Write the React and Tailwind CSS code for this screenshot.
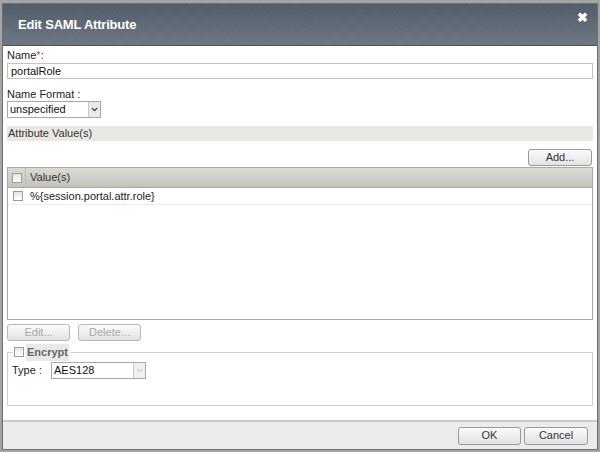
import { ChevronDown } from "lucide-react";

const font = "font-['Liberation_Sans',Arial,sans-serif]";

const Btn = ({ children, disabled, className = "" }) => (
  <button
    className={`h-[17px] rounded-[3px] border border-[#9a9a9a] bg-[linear-gradient(#fbfbfb,#e2e2e2)] text-[11px] leading-none ${
      disabled ? "text-[#a8a8a8] border-[#b8b8b8]" : "text-[#333]"
    } ${className}`}
  >
    {children}
  </button>
);

const Check = ({ className = "" }) => (
  <span
    className={`inline-block w-[10px] h-[10px] border border-[#9c9c9c] bg-[linear-gradient(#e6e6e6,#ffffff)] ${className}`}
  />
);

const Select = ({ value, className = "", disabled }) => (
  <div
    className={`flex h-[17px] border border-[#a9a9a9] bg-white ${className}`}
  >
    <div className="flex-1 pl-[2px] text-[11px] leading-[15px] text-[#111]">
      {value}
    </div>
    <div
      className={`w-[12px] flex items-center justify-center border-l border-[#c8c8c8] ${
        disabled ? "bg-[#f0f0f0]" : "bg-[#e9e9e9]"
      }`}
    >
      <ChevronDown
        size={9}
        strokeWidth={disabled ? 2 : 3.5}
        className={disabled ? "text-[#a0a0a0]" : "text-[#333]"}
      />
    </div>
  </div>
);

export default function App() {
  return (
    <div className={`w-[600px] h-[452px] bg-[#a4a4a4] pt-[3px] px-[2px] ${font}`}>
      <div className="h-[447px] flex flex-col border border-[#6f6f6f] bg-white">
        {/* header */}
        <div className="relative h-[42px] flex items-center pl-[15px] bg-[repeating-linear-gradient(135deg,rgba(255,255,255,0.04)_0px,rgba(255,255,255,0.04)_1px,transparent_1px,transparent_3px),linear-gradient(#4f5b67,#6b7682)] border-b border-[#4a525a]">
          <span className="text-white font-bold text-[13px] tracking-[-0.2px]">
            Edit SAML Attribute
          </span>
          <span className="absolute right-[9px] top-[7px] text-white font-bold text-[13px] leading-none">
            ✖
          </span>
        </div>

        {/* body */}
        <div className="flex-1 flex flex-col px-[4px] text-[11px] text-[#222]">
          <div className="mt-[3px] leading-[12px]">
            Name<span className="text-[#e33]">*</span>:
          </div>
          <div className="mt-[2px] h-[16px] border border-[#c3c3c3] pl-[3px] leading-[14px] text-[#111]">
            portalRole
          </div>
          <div className="mt-[9px] leading-[12px]">Name Format :</div>
          <Select value="unspecified" className="mt-[1px] w-[94px]" />

          <div className="mt-[8px] h-[15px] bg-[#e9e8e5] pl-[1px] leading-[15px] text-[#333]">
            Attribute Value(s)
          </div>

          <div className="mt-[8px] flex justify-end pr-[1px]">
            <Btn className="w-[64px]">Add...</Btn>
          </div>

          {/* table */}
          <div className="mt-[1px] h-[153px] border border-[#a9a9a9] flex flex-col">
            <div className="h-[20px] flex items-center bg-[linear-gradient(#dcdad5,#c4c2bc)] border-b border-[#a8a6a0]">
              <div className="w-[18px] flex justify-center pl-[1px] border-r border-[#bcbab4] h-full items-center">
                <Check />
              </div>
              <span className="pl-[4px] text-[#333]">Value(s)</span>
            </div>
            <div className="h-[17px] flex items-center border-b border-[#ececec]">
              <div className="w-[18px] flex justify-center pl-[1px]">
                <Check />
              </div>
              <span className="pl-[4px] text-[#222]">
                %{"{"}session.portal.attr.role{"}"}
              </span>
            </div>
          </div>

          <div className="mt-[4px] flex gap-[8px]">
            <Btn disabled className="w-[63px]">Edit...</Btn>
            <Btn disabled className="w-[63px]">Delete...</Btn>
          </div>

          {/* fieldset */}
          <fieldset className="mt-[3px] h-[62px] border border-[#cfcfdc] px-[4px] pb-0">
            <legend className="flex items-center ml-[1px] px-[1px]">
              <Check />
              <span className="ml-[2px] px-[1px] bg-[#e9e9e9] font-bold text-[#666]">
                Encrypt
              </span>
            </legend>
            <div className="flex items-center mt-[1px]">
              <span className="w-[39px] text-[#222]">Type :</span>
              <Select value="AES128" disabled className="w-[95px]" />
            </div>
          </fieldset>
        </div>

        {/* footer */}
        <div className="mt-[12px] h-[29px] bg-[#ebebeb] border-t-2 border-[#c9c9c9] flex items-center justify-end gap-[3px] pr-[9px]">
          <Btn className="w-[63px] h-[18px]">OK</Btn>
          <Btn className="w-[64px] h-[18px]">Cancel</Btn>
        </div>
      </div>
    </div>
  );
}
